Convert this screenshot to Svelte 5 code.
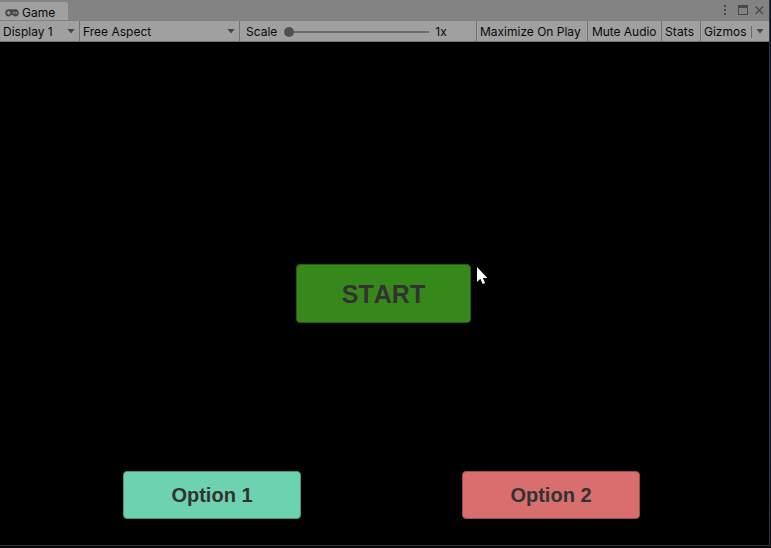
<script>
  const tools = [
    { label: 'Maximize On Play', width: 111, spacing: -0.01 },
    { label: 'Mute Audio', width: 74, spacing: -0.05 },
    { label: 'Stats', width: 39, spacing: 0.1 }
  ];
  const options = [
    { label: 'Option 1', tone: 'mint' },
    { label: 'Option 2', tone: 'coral' }
  ];
</script>

<div class="desktop">
  <div class="window">
    <header class="titlebar">
      <div class="tab">
        <svg class="pad" width="14" height="8" viewBox="0 0 14 8">
          <path fill="#484848" fill-rule="evenodd" d="M3.7 0.2C1.7.2.2 1.7.2 3.8s1.5 3.7 3.5 3.7c1.2 0 2-.6 2.500-1.400h1.600c.5.8 1.300 1.400 2.500 1.400 2 0 3.500-1.600 3.500-3.700S12.300.2 10.300.2zM3.100 1.900h1.200v1.300h1.300v1.200H4.300v1.300H3.100V4.400H1.800V3.200h1.300zM9 3.100a.8.8 0 1 0 .01 0zM11.200 3.100a.8.8 0 1 0 .01 0z" />
        </svg>
        <span>Game</span>
      </div>
      <div class="controls">
        <svg width="44" height="14" viewBox="0 0 44 14">
          <g fill="#484848">
            <rect x="3" y="1" width="2" height="2" />
            <rect x="3" y="5" width="2" height="2" />
            <rect x="3" y="9" width="2" height="2" />
            <path fill-rule="evenodd" d="M17 1h10v10H17zM18 4v6h8V4z" />
          </g>
          <path d="M34.500 2.500l7.500 7.500M42 2.500l-7.500 7.500" fill="none" stroke="#484848" stroke-width="1.3" />
        </svg>
      </div>
    </header>

    <div class="toolbar">
      <div class="cell display"><span>Display 1</span><i class="arrow"></i></div>
      <div class="cell aspect"><span>Free Aspect</span><i class="arrow"></i></div>
      <div class="cell scale">
        <span>Scale</span>
        <div class="track"><i class="knob"></i></div>
        <span>1x</span>
      </div>
      {#each tools as tool}
        <div class="cell tool" style="width: {tool.width}px; letter-spacing: {tool.spacing}px">{tool.label}</div>
      {/each}
      <div class="cell gizmos"><span>Gizmos</span><i class="split"></i><i class="arrow"></i></div>
    </div>

    <main class="game">
      <button class="start">START</button>
      <div class="options">
        {#each options as option}
          <button class="option {option.tone}">{option.label}</button>
        {/each}
      </div>
      <svg class="cursor" width="12" height="19" viewBox="0 0 12 19">
        <path fill="#fff" d="M1 1v15l3.300-3.200L6.700 18l2.400-1-2.300-5h4.500z" />
      </svg>
    </main>
  </div>
</div>

<style>
  :global(body) { margin: 0; background: #050508; }
  .desktop {
    width: 771px;
    height: 548px;
    box-sizing: border-box;
    overflow: hidden;
    background: linear-gradient(#101323, #1c2340 45%, #151a2e 85%, #07070c 99%);
  }
  .window {
    width: 770px;
    height: 546px;
    box-sizing: border-box;
    border-right: 1px solid #353539;
    border-bottom: 1px solid #353539;
    background: #000;
    display: flex;
    flex-direction: column;
    font: 12px/20px Inter, sans-serif;
    color: #090909;
  }
  .titlebar {
    height: 20px;
    flex: none;
    background: #838383;
    display: flex;
    justify-content: space-between;
    align-items: flex-end;
  }
  .tab {
    height: 18px;
    width: 68px;
    box-sizing: border-box;
    padding-left: 5px;
    display: flex;
    align-items: center;
    gap: 3px;
    background: #a0a0a0;
    border-radius: 0 3px 0 0;
  }
  .tab span { line-height: 18px; padding-top: 3px; }
  .pad { flex: none; margin-top: 3px; }
  .controls { height: 16px; width: 48px; display: flex; }
  .toolbar {
    height: 22px;
    flex: none;
    box-sizing: border-box;
    border-top: 1px solid #808080;
    border-bottom: 1px solid #707070;
    background: #a0a0a0;
    display: flex;
  }
  .cell {
    box-sizing: border-box;
    height: 20px;
    flex: none;
    border-right: 1px solid #747474;
    display: flex;
    align-items: center;
    justify-content: space-between;
    white-space: nowrap;
    padding: 1px 4px 0 3px;
  }
  .display { width: 80px; }
  .aspect { width: 160px; }
  .scale { width: 237px; padding-left: 6px; justify-content: flex-start; }
  .arrow {
    width: 8px;
    height: 5px;
    background: #484848;
    clip-path: polygon(0 0, 100% 0, 50% 100%);
    margin-bottom: 1px;
  }
  .track {
    width: 140px;
    height: 2px;
    margin: 0 6px 0 12px;
    background: #6b6b6b;
    display: flex;
    align-items: center;
  }
  .knob { flex: none; width: 10px; height: 10px; margin-left: -5px; border-radius: 50%; background: #505050; }
  .tool { padding-right: 0; }
  .tool:nth-child(5) { padding-left: 4px; }
  .gizmos { width: 68px; border-right: 0; padding-right: 5px; }
  .split { width: 1px; height: 12px; margin-left: 1px; background: #696969; }
  .game {
    position: relative;
    flex: 1;
    box-sizing: border-box;
    padding-top: 222px;
    display: flex;
    flex-direction: column;
    align-items: center;
  }
  button {
    flex: none;
    box-sizing: border-box;
    padding: 0;
    margin: 0;
    border-radius: 4px;
    font-family: "Liberation Sans", Arial, sans-serif;
    font-weight: bold;
    color: #323232;
  }
  .start {
    width: 175px;
    height: 59px;
    margin-right: 2px;
    padding-top: 1px;
    background: #37881a;
    border: 1px solid #245b11;
    font-size: 25px;
    font-kerning: none;
  }
  .options {
    width: 100%;
    box-sizing: border-box;
    padding: 0 129px 0 123px;
    margin-top: 148px;
    display: flex;
    justify-content: space-between;
  }
  .option { width: 178px; height: 48px; font-size: 20px; }
  .mint { background: #6cd2af; border: 1px solid #4b927a; }
  .coral { background: #d96e6e; border: 1px solid #984d4d; }
  .cursor { position: absolute; left: 476px; top: 224px; }
</style>
